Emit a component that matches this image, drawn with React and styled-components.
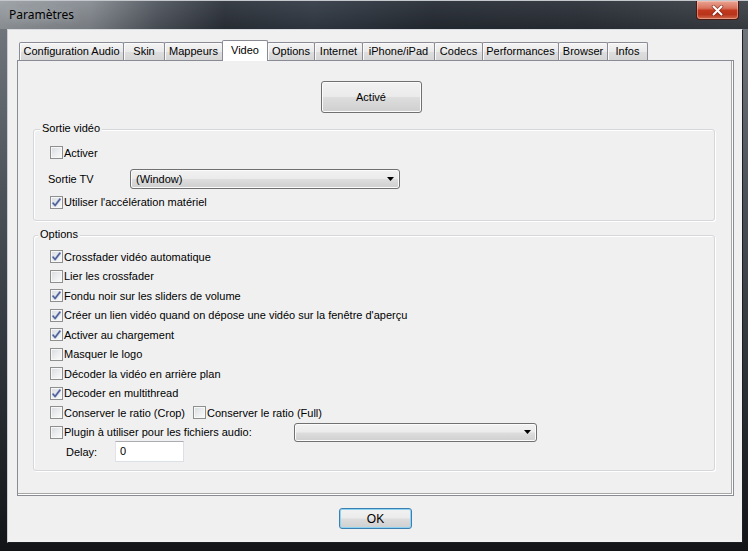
import styled, { createGlobalStyle } from 'styled-components';

const GlobalStyle = createGlobalStyle`
  html, body { margin:0; padding:0; }
  body {
    background:#1a1d21;
    font-family:"Liberation Sans", Arial, sans-serif;
    font-size:11px;
    color:#000;
  }
`

const Window = styled.div`
  width:748px;
  height:551px;
  box-sizing:border-box;
  display:flex;
  flex-direction:column;
  padding:0 5px 8px 7px;
  background:linear-gradient(to bottom, #767b82 0%, #4c5259 35%, #2a3036 70%, #121417 100%);
`

const TitleBar = styled.div`
  height:29px;
  box-sizing:border-box;
  margin:0 -5px 0 -7px;
  padding:0 7px 0 9px;
  display:flex;
  align-items:flex-start;
  border-top:1px solid #c4c8cc;
  background:
    linear-gradient(to bottom, rgba(255,255,255,0.06), rgba(0,0,0,0.12)),
    linear-gradient(to right, #9a9fa4 0%, #868b91 12%, #50565e 21%, #2c323a 30%, #333b46 42%, #262c34 58%, #2b3038 78%, #3c4147 100%);
`

const Title = styled.span`
  font-family:"Noto Sans", "DejaVu Sans", sans-serif;
  font-size:12px;
  line-height:28px;
  color:#000;
  text-shadow:0 0 8px rgba(200,205,210,0.75);
`

const CloseButton = styled.div`
  margin-left:auto;
  margin-right:2px;
  width:43px;
  height:19px;
  box-sizing:border-box;
  border:1px solid #4a1a12;
  border-top:none;
  border-radius:0 0 4px 4px;
  display:flex;
  align-items:center;
  justify-content:center;
  background:linear-gradient(to bottom, #e9a593 0%, #d9725c 40%, #c2391f 52%, #b8341a 75%, #d26a4c 100%);
  box-shadow:inset 0 0 0 1px rgba(255,210,200,0.45);
`

const Client = styled.div`
  flex:1;
  display:flex;
  flex-direction:column;
  background:#f0f0f0;
  border:1px solid #1b1f24;
  border-top-color:#d9dde1;
  border-left-color:#c9cdd2;
  padding:10px 8px 0 9px;
`

const TabStrip = styled.div`
  height:20px;
  display:flex;
  align-items:flex-end;
  padding-left:2px;
`

const Tab = styled.div`
  position:relative;
  z-index:${p => (p.$active ? 2 : 1)};
  box-sizing:border-box;
  width:${p => p.$w}px;
  height:${p => (p.$active ? 21 : 18)}px;
  margin-left:${p => (p.$first ? 0 : -1)}px;
  margin-bottom:${p => (p.$active ? -1 : 0)}px;
  border:1px solid #898c95;
  border-bottom:none;
  border-radius:2px 2px 0 0;
  text-align:center;
  line-height:${p => (p.$active ? 18 : 17)}px;
  white-space:nowrap;
  background:${p => (p.$active
    ? '#ffffff'
    : 'linear-gradient(to bottom, #f4f4f4 0%, #eaeaea 50%, #dedede 52%, #d6d6d6 100%)')};
  box-shadow:${p => (p.$active ? 'none' : 'inset 1px 1px 0 #fafafa')};
`

const Panel = styled.div`
  height:436px;
  box-sizing:border-box;
  border:1px solid #898c95;
  background:#f0f0f0;
  box-shadow:inset -1px -1px 0 #ffffff, inset -2px -2px 0 #a6a6a6;
  padding:20px 18px 0 15px;
  display:flex;
  flex-direction:column;
`

const ActionRow = styled.div`
  display:flex;
  justify-content:center;
  padding-right:6px;
`

const PushButton = styled.div`
  box-sizing:border-box;
  width:${p => p.$w}px;
  height:${p => p.$h}px;
  border:1px solid ${p => (p.$default ? '#3c7fb1' : '#707070')};
  border-radius:3px;
  display:flex;
  align-items:center;
  justify-content:center;
  background:linear-gradient(to bottom, #f2f2f2 0%, #ebebeb 48%, #dddddd 52%, #cfcfcf 100%);
  box-shadow:inset 0 0 0 1px ${p => (p.$default ? '#8ed3f1' : '#fbfbfb')};
  font-size:${p => (p.$default ? 12 : 11)}px;
`

const Group = styled.div`
  position:relative;
  box-sizing:border-box;
  height:${p => p.$h}px;
  margin-top:${p => p.$mt}px;
  border:1px solid #d5d7da;
  border-radius:3px;
  box-shadow:inset 1px 1px 0 #ffffff, 1px 1px 0 #ffffff;
  padding:${p => p.$pt}px 0 0 16px;
  display:flex;
  flex-direction:column;
`

const Legend = styled.span`
  position:absolute;
  top:-8px;
  left:${p => p.$left}px;
  padding:0 2px;
  line-height:13px;
  background:#f0f0f0;
`

const Row = styled.div`
  display:flex;
  align-items:center;
  height:${p => p.$h || 19.5}px;
  margin-top:${p => p.$mt || 0}px;
`

const CheckItem = styled.label`
  display:flex;
  align-items:center;
  gap:1px;
  margin-left:${p => p.$ml || 0}px;
`

const CheckText = styled.span`
  display:inline-block;
  width:${p => (p.$w ? `${p.$w}px` : 'auto')};
  white-space:nowrap;
`

const Box = styled.span`
  width:13px;
  height:13px;
  box-sizing:border-box;
  border:1px solid #8e8f8f;
  display:inline-flex;
  align-items:center;
  justify-content:center;
  background:linear-gradient(135deg, #d8dbe0 0%, #eceef0 55%, #fbfbfb 100%);
  box-shadow:inset 0 0 0 1px #f7f7f7;
`

const FieldLabel = styled.span`
  width:${p => p.$w}px;
  margin-left:${p => p.$ml || 0}px;
`

const Combo = styled.div`
  box-sizing:border-box;
  width:${p => p.$w}px;
  height:${p => p.$h}px;
  border:1px solid #707070;
  border-radius:3px;
  display:flex;
  align-items:center;
  padding:0 5px 0 5px;
  background:linear-gradient(to bottom, #f2f2f2 0%, #ebebeb 48%, #dddddd 52%, #cfcfcf 100%);
  box-shadow:inset 0 0 0 1px #fbfbfb;
`

const ComboText = styled.span`
  flex:1;
`

const TextInput = styled.div`
  box-sizing:border-box;
  width:69px;
  height:21px;
  background:#ffffff;
  border:1px solid #dbdfe6;
  border-top-color:#abadb3;
  border-left-color:#e2e3ea;
  padding-left:4px;
  line-height:19px;
`

const Footer = styled.div`
  flex:1;
  display:flex;
  align-items:center;
  justify-content:center;
  padding-bottom:1px;
`

const tabs = [
  { label: 'Configuration Audio', w: 105 },
  { label: 'Skin', w: 42 },
  { label: 'Mappeurs', w: 59 },
  { label: 'Video', w: 46, active: true },
  { label: 'Options', w: 48 },
  { label: 'Internet', w: 49 },
  { label: 'iPhone/iPad', w: 73 },
  { label: 'Codecs', w: 49 },
  { label: 'Performances', w: 77 },
  { label: 'Browser', w: 50 },
  { label: 'Infos', w: 41 },
];

const options = [
  { label: 'Crossfader vidéo automatique', checked: true },
  { label: 'Lier les crossfader', checked: false },
  { label: 'Fondu noir sur les sliders de volume', checked: true },
  { label: "Créer un lien vidéo quand on dépose une vidéo sur la fenêtre d'aperçu", checked: true },
  { label: 'Activer au chargement', checked: true },
  { label: 'Masquer le logo', checked: false },
  { label: 'Décoder la vidéo en arrière plan', checked: false },
  { label: 'Decoder en multithread', checked: true },
];

function Check({ checked, label, w, ml }) {
  return (
    <CheckItem $ml={ml}>
      <Box>
        {checked && (
          <svg width="11" height="11" viewBox="0 0 11 11">
            <path d="M1.6 5.6 L4.1 8.4 L9.3 1.6" fill="none" stroke="#b3bfdc" strokeWidth="2.6" strokeLinejoin="round" />
            <path d="M1.6 5.6 L4.1 8.4 L9.3 1.6" fill="none" stroke="#4a5c94" strokeWidth="1.4" />
          </svg>
        )}
      </Box>
      <CheckText $w={w}>{label}</CheckText>
    </CheckItem>
  );
}

function Arrow() {
  return (
    <svg width="7" height="4" viewBox="0 0 7 4">
      <path d="M0 0 H7 L3.5 4 Z" fill="#000" />
    </svg>
  );
}

export default function App() {
  return (
    <>
      <GlobalStyle />
      <Window>
        <TitleBar>
          <Title>Paramètres</Title>
          <CloseButton>
            <svg width="13" height="11" viewBox="0 0 13 11">
              <path d="M2.5 1.5 L10.5 9.5 M10.5 1.5 L2.5 9.5" stroke="#5a1b10" strokeWidth="3.6" strokeLinecap="round" opacity="0.55" />
              <path d="M2.5 1.5 L10.5 9.5 M10.5 1.5 L2.5 9.5" stroke="#ffffff" strokeWidth="2" strokeLinecap="round" />
            </svg>
          </CloseButton>
        </TitleBar>

        <Client>
          <TabStrip>
            {tabs.map((t, i) => (
              <Tab key={t.label} $w={t.w} $active={t.active} $first={i === 0}>
                {t.label}
              </Tab>
            ))}
          </TabStrip>

          <Panel>
            <ActionRow>
              <PushButton $w={101} $h={32}>Activé</PushButton>
            </ActionRow>

            <Group $h={92} $mt={16} $pt={13}>
              <Legend $left={6}>Sortie vidéo</Legend>
              <Row $h={19}>
                <Check label="Activer" />
              </Row>
              <Row $h={20} $mt={7}>
                <FieldLabel $w={82} $ml={-2}>Sortie TV</FieldLabel>
                <Combo $w={270} $h={20}>
                  <ComboText>(Window)</ComboText>
                  <Arrow />
                </Combo>
              </Row>
              <Row $h={19} $mt={3.5}>
                <Check checked label="Utiliser l'accélération matériel" />
              </Row>
            </Group>

            <Group $h={236} $mt={14} $pt={11}>
              <Legend $left={4}>Options</Legend>
              {options.map(o => (
                <Row key={o.label}>
                  <Check checked={o.checked} label={o.label} />
                </Row>
              ))}
              <Row>
                <Check label="Conserver le ratio (Crop)" />
                <Check label="Conserver le ratio (Full)" ml={8} />
              </Row>
              <Row>
                <Check label="Plugin à utiliser pour les fichiers audio:" w={230} />
                <Combo $w={243} $h={19}>
                  <ComboText />
                  <Arrow />
                </Combo>
              </Row>
              <Row>
                <FieldLabel $w={49} $ml={16}>Delay:</FieldLabel>
                <TextInput>0</TextInput>
              </Row>
            </Group>
          </Panel>

          <Footer>
            <PushButton $w={73} $h={21} $default>OK</PushButton>
          </Footer>
        </Client>
      </Window>
    </>
  );
}
